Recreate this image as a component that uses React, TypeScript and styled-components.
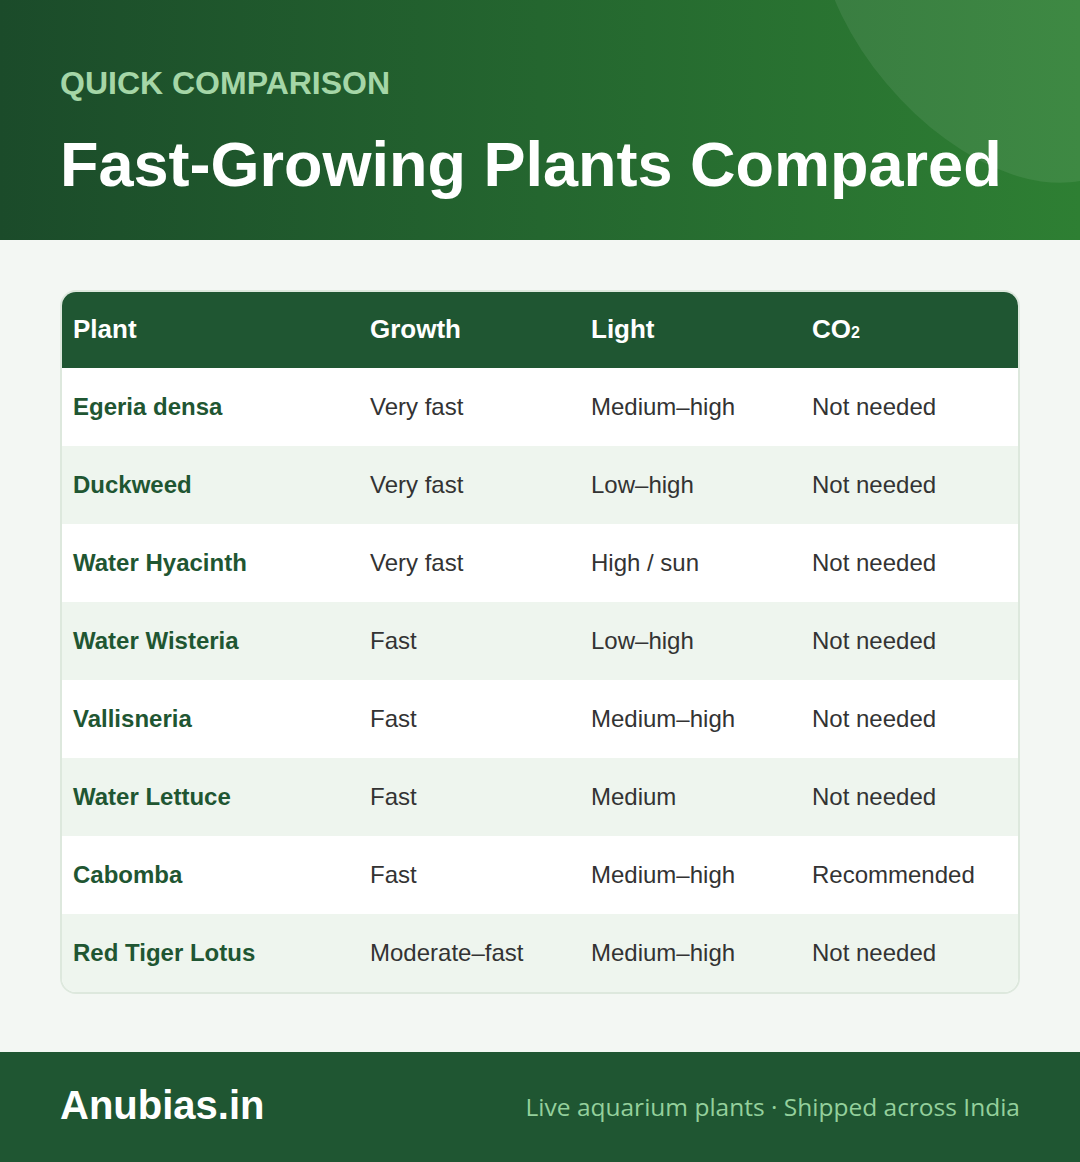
import React from 'react';
import styled, { createGlobalStyle } from 'styled-components';

const GlobalStyle = createGlobalStyle`
  html, body {
    margin: 0;
    padding: 0;
    background: #f3f7f3;
  }
  body {
    font-family: 'Liberation Sans', Arial, sans-serif;
  }
`;

interface Plant {
  name: string;
  growth: string;
  light: string;
  co2: string;
}

const plants: Plant[] = [
  { name: 'Egeria densa', growth: 'Very fast', light: 'Medium–high', co2: 'Not needed' },
  { name: 'Duckweed', growth: 'Very fast', light: 'Low–high', co2: 'Not needed' },
  { name: 'Water Hyacinth', growth: 'Very fast', light: 'High / sun', co2: 'Not needed' },
  { name: 'Water Wisteria', growth: 'Fast', light: 'Low–high', co2: 'Not needed' },
  { name: 'Vallisneria', growth: 'Fast', light: 'Medium–high', co2: 'Not needed' },
  { name: 'Water Lettuce', growth: 'Fast', light: 'Medium', co2: 'Not needed' },
  { name: 'Cabomba', growth: 'Fast', light: 'Medium–high', co2: 'Recommended' },
  { name: 'Red Tiger Lotus', growth: 'Moderate–fast', light: 'Medium–high', co2: 'Not needed' },
];

export default function App() {
  return (
    <Page>
      <GlobalStyle />
      <Hero>
        <Blob />
        <Eyebrow>QUICK COMPARISON</Eyebrow>
        <Title>Fast-Growing Plants Compared</Title>
      </Hero>
      <Main>
        <Card>
          <HeadRow>
            <HeadCell>Plant</HeadCell>
            <HeadCell>Growth</HeadCell>
            <HeadCell>Light</HeadCell>
            <HeadCell>
              CO<Sub>2</Sub>
            </HeadCell>
          </HeadRow>
          {plants.map((p, i) => (
            <Row key={p.name} striped={i % 2 === 1}>
              <NameCell>{p.name}</NameCell>
              <Cell>{p.growth}</Cell>
              <Cell>{p.light}</Cell>
              <Cell>{p.co2}</Cell>
            </Row>
          ))}
        </Card>
      </Main>
      <Footer>
        <Brand>Anubias.in</Brand>
        <Tagline>Live aquarium plants · Shipped across India</Tagline>
      </Footer>
    </Page>
  );
}

const Page = styled.div`
  width: 1080px;
  min-height: 1162px;
  display: flex;
  flex-direction: column;
  background: #f3f7f3;
`;

const Hero = styled.header`
  position: relative;
  overflow: hidden;
  height: 240px;
  box-sizing: border-box;
  padding: 64px 60px 0;
  background: linear-gradient(90deg, #1b4b2a 0%, #24662f 50%, #2e7f33 100%);
`;

const Blob = styled.div`
  position: absolute;
  width: 420px;
  height: 250px;
  left: 772px;
  top: -122px;
  border-radius: 50%;
  background: rgba(255, 255, 255, 0.08);
  transform: rotate(50deg);
`;

const Eyebrow = styled.div`
  position: relative;
  font-size: 32px;
  font-weight: 700;
  color: #a5d6a7;
  line-height: 38px;
`;

const Title = styled.h1`
  position: relative;
  margin: 24px 0 0;
  font-size: 63px;
  font-weight: 700;
  color: #ffffff;
  line-height: 76px;
`;

const Main = styled.main`
  flex: 1;
  padding: 50px 60px 58px;
`;

const Card = styled.div`
  border: 2px solid #dde8dd;
  border-radius: 16px;
  overflow: hidden;
  background: #ffffff;
`;

const HeadRow = styled.div`
  display: grid;
  grid-template-columns: 297px 221px 221px 1fr;
  height: 76px;
  padding-bottom: 2px;
  box-sizing: border-box;
  align-items: center;
  background: #1f5632;
`;

const HeadCell = styled.div`
  padding: 0 11px;
  font-size: 26px;
  font-weight: 700;
  color: #ffffff;
`;

const Sub = styled.span`
  font-size: 16px;
`;

const Row = styled.div<{ striped: boolean }>`
  display: grid;
  grid-template-columns: 297px 221px 221px 1fr;
  height: 78px;
  align-items: center;
  background: ${p => (p.striped ? '#eef5ee' : '#ffffff')};
`;

const Cell = styled.div`
  padding: 0 11px;
  font-size: 24px;
  color: #333333;
`;

const NameCell = styled(Cell)`
  font-weight: 700;
  color: #1f5632;
`;

const Footer = styled.footer`
  height: 110px;
  box-sizing: border-box;
  padding: 0 60px 4px;
  display: flex;
  align-items: center;
  justify-content: space-between;
  background: #1f5632;
`;

const Brand = styled.div`
  font-size: 40px;
  font-weight: 700;
  color: #ffffff;
`;

const Tagline = styled.div`
  font-family: 'Open Sans', 'Noto Sans', sans-serif;
  font-size: 24.5px;
  color: #94d09c;
  padding-top: 2px;
`;
